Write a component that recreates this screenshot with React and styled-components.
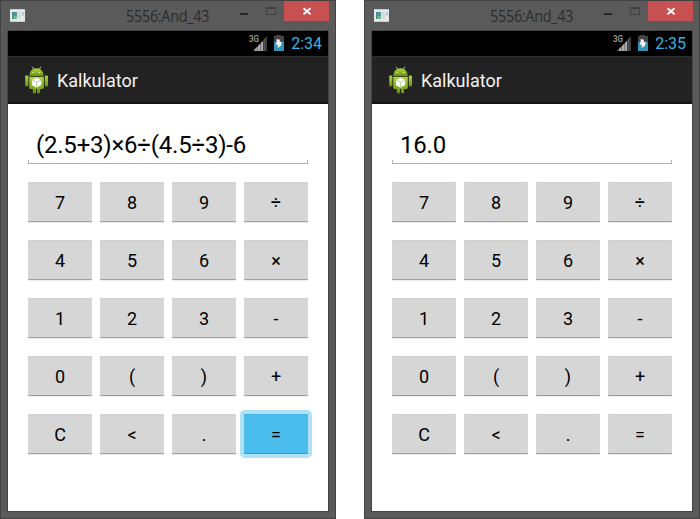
import React from "react";
import styled, { createGlobalStyle, css } from "styled-components";

const GlobalStyle = createGlobalStyle`
  *, *::before, *::after { box-sizing: border-box; }
  body { margin: 0; background: #fff; overflow: hidden; }
`;

const Desktop = styled.main`
  display: flex;
  justify-content: space-between;
  width: 700px;
  height: 519px;
  font-family: Roboto, "Liberation Sans", sans-serif;
`;

const Window = styled.section`
  display: flex;
  flex-direction: column;
  width: 336px;
  height: 519px;
  padding: 0 6px 6px;
  background: #5a5a5a;
  border: 1px solid #444344;
`;

const TitleBar = styled.header`
  display: grid;
  grid-template-columns: 113px minmax(0, 1fr) 124px;
  height: 29px;
  padding-left: 1px;
`;

const AppIconSlot = styled.div`
  padding: 8px 0 0 2px;
  line-height: 0;
`;

const WindowTitle = styled.div`
  justify-self: start;
  padding-top: 5px;
  margin-left: 5px;
  font: 16px/20px "Open Sans", "Noto Sans", sans-serif;
  letter-spacing: -0.3px;
  white-space: nowrap;
  transform: scaleX(0.9);
  transform-origin: left;
  color: #2d2d2f;
`;

const WindowControls = styled.div`
  display: flex;
  justify-content: flex-end;
  align-items: flex-start;
  line-height: 0;
`;

const CloseButton = styled.button`
  width: 45px;
  height: 20px;
  padding: 0;
  border: 0;
  margin-left: 8px;
  background: #c75050;
  line-height: 0;
`;

const Screen = styled.div`
  flex: 1;
  display: flex;
  flex-direction: column;
  border: 1px solid #464445;
  background: #fff;
`;

const StatusBar = styled.div`
  display: flex;
  justify-content: flex-end;
  height: 25px;
  padding-right: 6px;
  background: #000;
  color: #33b5e5;
  font-size: 16px;
  line-height: 26px;
`;

const BatterySlot = styled.span`
  margin-left: 4px;
  line-height: 0;
`;

const Clock = styled.span`
  width: 31px;
  margin-left: 6px;
  text-align: right;
  white-space: nowrap;
`;

const ActionBar = styled.div`
  display: flex;
  align-items: center;
  height: 48px;
  padding: 1px 0 0 15px;
  gap: 7px;
  background: #222;
  border-top: 1px solid #2e2e2e;
  border-bottom: 2px solid #151114;
  color: #f3f3f3;
  font-size: 18px;
`;

const Calculator = styled.div`
  padding: 24px 20px 0;
`;

const Display = styled.div`
  position: relative;
  height: 36px;
  padding-left: 8px;
  border-bottom: 1px solid #b0b0b0;
  font-size: 24px;
  line-height: 34px;
  letter-spacing: -0.22px;
  white-space: nowrap;
  color: #000;

  &::after {
    content: "";
    position: absolute;
    inset: auto 0 0 0;
    height: 3px;
    border: solid #b0b0b0;
    border-width: 0 1px;
  }
`;

const Keypad = styled.div`
  display: grid;
  grid-template-columns: repeat(4, 64px);
  grid-auto-rows: 40px;
  gap: 18px 8px;
  margin-top: 18px;
`;

const Key = styled.button`
  padding: 1px 0 0;
  border: solid #cfcfcf;
  border-width: 1px 0;
  border-bottom-color: #9d9d9d;
  border-radius: 1px;
  background: #d6d6d6;
  box-shadow: 0 1px 0 #ececec;
  color: #000;
  font: 18px/36px Roboto, sans-serif;

  ${({ $pressed }) => $pressed && css`
    position: relative;
    background: #4abdec;
    border-top-color: #46b4e1;
    border-bottom-color: #3494b9;
    border-radius: 0;
    box-shadow: none;

    &::after {
      content: "";
      position: absolute;
      inset: -5px -4px;
      border: 4px solid #aee2f6;
      border-radius: 5px;
    }
  `}
`;

const KEYS = ["7", "8", "9", "÷", "4", "5", "6", "×", "1", "2", "3", "-", "0", "(", ")", "+", "C", "<", ".", "="];

function AppIcon() {
  return (
    <svg width="16" height="13" viewBox="0 0 16 13">
      <path fill="#e5e9e9" d="M0 0h15v13H0z" />
      <path fill="#c5ced2" d="M0 0h15v1H0zM0 12h15v1H0z" />
      <path fill="#51988e" d="M2 3h5v7H2z" />
      <path fill="#4b82a2" d="M2 3h2v3H2z" />
      <path fill="#70b69b" d="M4 7h3v3H4z" />
      <path fill="#d6d8da" d="M8 3h3v7H8z" />
      <path fill="#a9ced8" d="M12 3h2v3h-2z" />
      <path fill="#b3d9c4" d="M12 6h2v1h-2z" />
    </svg>
  );
}

function MinMaxIcons() {
  return (
    <svg width="37" height="20" viewBox="0 0 37 20">
      <path fill="#272727" d="M1 12h8v2H1z" />
      <path fill="none" stroke="#414141" d="M27.5 6.5h9v7h-9z" />
      <path fill="#414141" d="M28 7h8v1h-8z" />
    </svg>
  );
}

function CloseIcon() {
  return (
    <svg width="45" height="20" viewBox="0 0 45 20">
      <path d="m19.5 7.3 7 6M26.5 7.3l-7 6" fill="none" stroke="#fff" strokeWidth="1.8" />
    </svg>
  );
}

function SignalIcon() {
  return (
    <svg width="20" height="25" viewBox="0 0 20 25">
      <text x="0" y="11" fill="#a0a0a0" fontFamily="Roboto" fontSize="8.8" fontWeight="500" textLength="10" lengthAdjust="spacingAndGlyphs">3G</text>
      <path fill="#777" d="M4 20 14 10v10z" />
      <path fill="#aaa" d="M6 18l2-2v4H6zM9 15l2-2v7H9zM12 12l2-2v10h-2z" />
      <path fill="#3d3d3d" d="M14 20V9l4-4v15z" />
      <path fill="#555" d="M15 8h1v12h-1z" />
    </svg>
  );
}

function BatteryIcon() {
  return (
    <svg width="12" height="25" viewBox="0 0 12 25">
      <path fill="#454545" d="M3 4h5v1h3v6H1V5h2z" />
      <path fill="#3295b8" d="M1 11h10v9H1z" />
      <path fill="#f5f5f5" d="m3.8 8 3 .8v2.4l2-.6-.8 4.2L4.5 17l.6-3.2-2 .5z" />
    </svg>
  );
}

function AndroidIcon() {
  return (
    <svg width="27" height="30" viewBox="0 0 27 30">
      <defs>
        <linearGradient id="robot" x1="0" y1="0" x2="0" y2="1">
          <stop stopColor="#b1d546" />
          <stop offset=".55" stopColor="#8bb324" />
          <stop offset="1" stopColor="#668c18" />
        </linearGradient>
      </defs>
      <path d="m9 1.7 2 3M18 1.7l-2 3" stroke="#a5c750" strokeWidth="1" />
      <path fill="url(#robot)" d="M6.3 11C6.3 6.4 9.3 3.2 13.5 3.2S20.7 6.4 20.7 11z" />
      <path fill="url(#robot)" d="M6.3 11.8h14.5v10.7q0 1.5-1.5 1.5h-2.2v3q0 1.6-1.6 1.6T14 27v-3h-1v3q0 1.6-1.6 1.6T9.8 27v-3H7.8q-1.5 0-1.5-1.5z" />
      <rect x="2.2" y="10.5" width="3.2" height="11" rx="1" fill="url(#robot)" />
      <rect x="21.8" y="10.5" width="3.2" height="11" rx="1" fill="url(#robot)" />
      <path fill="#e9f1c8" d="M9.5 7h1.2v1.2H9.5zM16 7h1.2v1.2H16z" />
      <path fill="#fff" d="m13.5 12.8 4.6 2.2v5l-4.6 2.7L9 20v-5z" />
      <path fill="none" stroke="#a0be68" strokeWidth=".7" d="m9 15 4.5 2.3 4.6-2.3M13.5 17.3v5.4" />
    </svg>
  );
}

function Emulator({ time, value, pressedKey }) {
  return (
    <Window>
      <TitleBar>
        <AppIconSlot><AppIcon /></AppIconSlot>
        <WindowTitle>5556:And_43</WindowTitle>
        <WindowControls>
          <MinMaxIcons />
          <CloseButton aria-label="Close"><CloseIcon /></CloseButton>
        </WindowControls>
      </TitleBar>
      <Screen>
        <StatusBar>
          <SignalIcon />
          <BatterySlot><BatteryIcon /></BatterySlot>
          <Clock>{time}</Clock>
        </StatusBar>
        <ActionBar>
          <AndroidIcon />
          <span>Kalkulator</span>
        </ActionBar>
        <Calculator>
          <Display>{value}</Display>
          <Keypad>
            {KEYS.map((key) => <Key key={key} $pressed={key === pressedKey}>{key}</Key>)}
          </Keypad>
        </Calculator>
      </Screen>
    </Window>
  );
}

export default function App() {
  return (
    <>
      <GlobalStyle />
      <Desktop>
        <Emulator time="2:34" value="(2.5+3)×6÷(4.5÷3)-6" pressedKey="=" />
        <Emulator time="2:35" value="16.0" />
      </Desktop>
    </>
  );
}
